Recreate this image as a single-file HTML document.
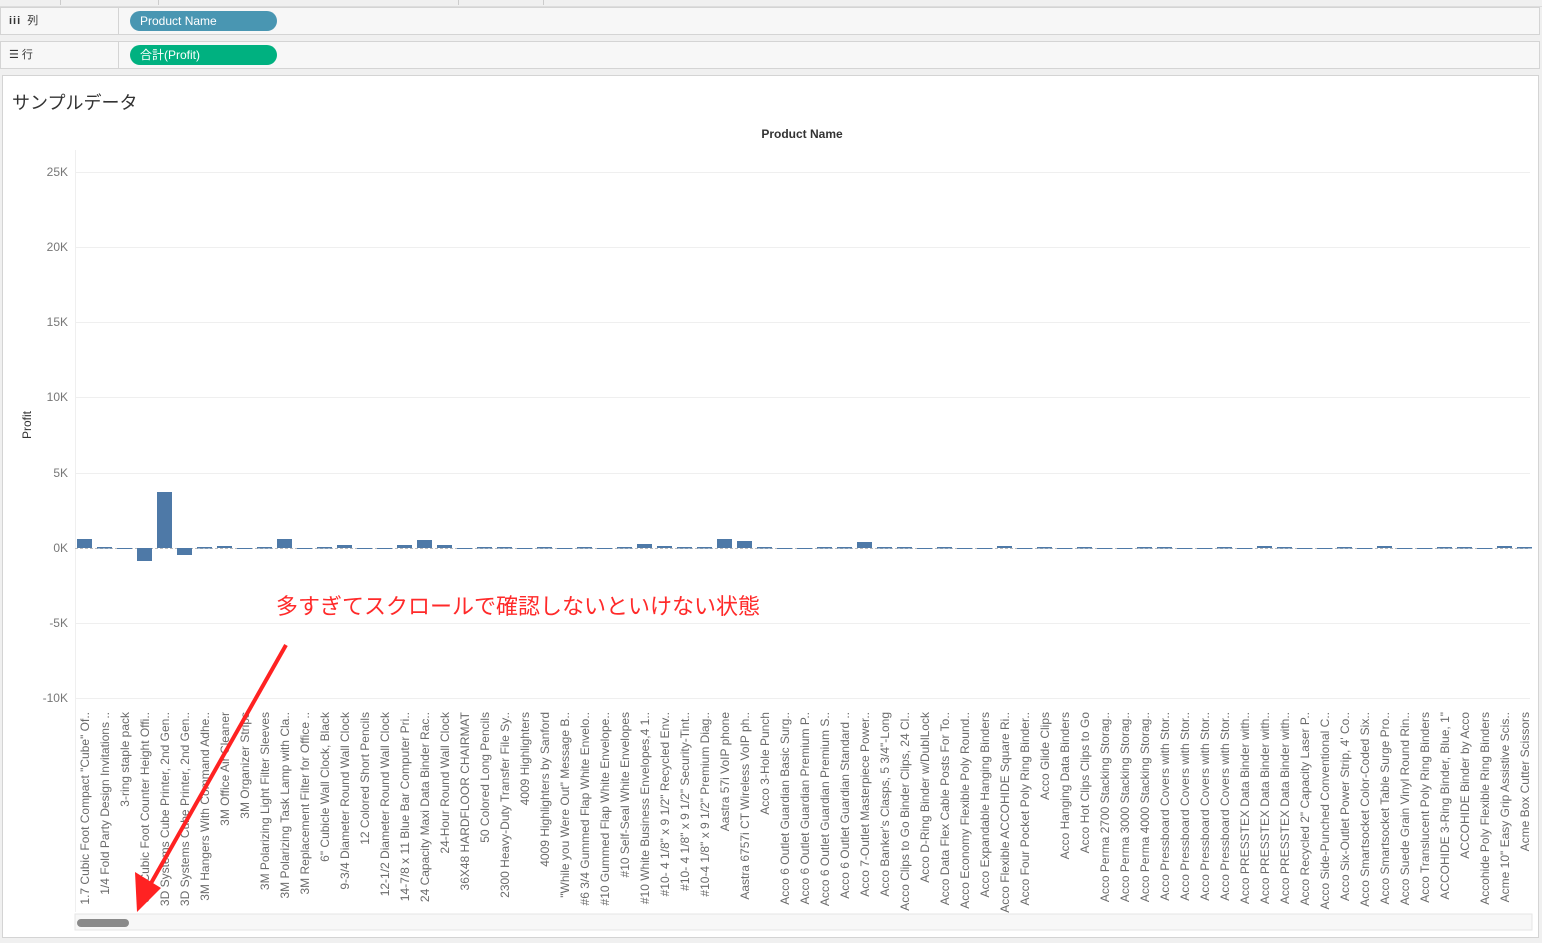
<!DOCTYPE html>
<html><head><meta charset="utf-8"><style>
body{margin:0;width:1542px;height:943px;background:#f0f0f0;font-family:"Liberation Sans","Noto Sans CJK JP",sans-serif;position:relative;overflow:hidden}
.shelf{position:absolute;left:0;width:1538px;height:26px;background:#f7f7f7;border:1px solid #d4d4d4;}
.shelf .lab{position:absolute;left:0;top:0;width:118px;height:26px;border-right:1px solid #d4d4d4;font-size:11px;color:#333;line-height:26px;padding-left:8px;box-sizing:border-box}
.pill{position:absolute;left:129px;top:3px;width:147px;height:20px;border-radius:10px;color:#fff;font-size:12px;line-height:20px;padding-left:10px;box-sizing:border-box}
</style></head><body>
<div style="position:absolute;left:0;top:0;width:1542px;height:6px;background:#f0f0f0;border-bottom:1px solid #ddd"></div>
<div style="position:absolute;left:60px;top:0;width:1px;height:5px;background:#ccc"></div>
<div style="position:absolute;left:158px;top:0;width:1px;height:5px;background:#ccc"></div>
<div style="position:absolute;left:458px;top:0;width:1px;height:5px;background:#ccc"></div>
<div style="position:absolute;left:543px;top:0;width:1px;height:5px;background:#ccc"></div>
<div class="shelf" style="top:7px"><div class="lab"><b style="letter-spacing:1px">iii</b>&nbsp; 列</div><div class="pill" style="background:#4996b2">Product Name</div></div>
<div class="shelf" style="top:41px"><div class="lab">☰ 行</div><div class="pill" style="background:#00b180">合計(Profit)</div></div>
<div style="position:absolute;left:2px;top:75px;width:1535px;height:861px;background:#fff;border:1px solid #d4d4d4"></div>
<div style="position:absolute;left:12px;top:89px;font-size:18px;color:#333">サンプルデータ</div>
<svg style="position:absolute;left:0;top:0" width="1542" height="943" font-family="Liberation Sans, sans-serif">
<g stroke="#efefef" stroke-width="1">
<line x1="75" x2="1530" y1="172.5" y2="172.5"/><line x1="75" x2="1530" y1="247.5" y2="247.5"/><line x1="75" x2="1530" y1="322.5" y2="322.5"/><line x1="75" x2="1530" y1="397.5" y2="397.5"/><line x1="75" x2="1530" y1="473.5" y2="473.5"/><line x1="75" x2="1530" y1="623.5" y2="623.5"/><line x1="75" x2="1530" y1="698.5" y2="698.5"/>
<line x1="75.5" x2="75.5" y1="150" y2="912"/>
</g>
<line x1="75" x2="1530" y1="548.5" y2="548.5" stroke="#bbb" stroke-dasharray="3,2"/>
<g font-size="12" fill="#777" text-anchor="end">
<text x="68" y="176">25K</text><text x="68" y="251">20K</text><text x="68" y="326">15K</text><text x="68" y="401">10K</text><text x="68" y="477">5K</text><text x="68" y="552">0K</text><text x="68" y="627">-5K</text><text x="68" y="702">-10K</text>
</g>
<text x="802" y="138" font-size="12" font-weight="bold" fill="#333" text-anchor="middle">Product Name</text>
<text transform="translate(31,425) rotate(-90)" font-size="12" fill="#333" text-anchor="middle">Profit</text>
<g fill="#4e79a7">
<rect x="77" y="539" width="15" height="9"/><rect x="97" y="547" width="15" height="1.5"/><rect x="117" y="548" width="15" height="1"/><rect x="137" y="548" width="15" height="13"/><rect x="157" y="492" width="15" height="56"/><rect x="177" y="548" width="15" height="7"/><rect x="197" y="547" width="15" height="1.5"/><rect x="217" y="546" width="15" height="2"/><rect x="237" y="548" width="15" height="1"/><rect x="257" y="547" width="15" height="1.5"/>
<rect x="277" y="539" width="15" height="9"/><rect x="297" y="548" width="15" height="1"/><rect x="317" y="547" width="15" height="1.5"/><rect x="337" y="545" width="15" height="3"/><rect x="357" y="548" width="15" height="1"/><rect x="377" y="548" width="15" height="1"/><rect x="397" y="545" width="15" height="3"/><rect x="417" y="540" width="15" height="8"/><rect x="437" y="545" width="15" height="3"/><rect x="457" y="548" width="15" height="1"/>
<rect x="477" y="547" width="15" height="1.5"/><rect x="497" y="547" width="15" height="1.5"/><rect x="517" y="548" width="15" height="1"/><rect x="537" y="547" width="15" height="1.5"/><rect x="557" y="548" width="15" height="1"/><rect x="577" y="547" width="15" height="1.5"/><rect x="597" y="548" width="15" height="1"/><rect x="617" y="547" width="15" height="1.5"/><rect x="637" y="544" width="15" height="4"/><rect x="657" y="546" width="15" height="2"/>
<rect x="677" y="547" width="15" height="1.5"/><rect x="697" y="547" width="15" height="1.5"/><rect x="717" y="539" width="15" height="9"/><rect x="737" y="541" width="15" height="7"/><rect x="757" y="547" width="15" height="1.5"/><rect x="777" y="548" width="15" height="1"/><rect x="797" y="548" width="15" height="1"/><rect x="817" y="547" width="15" height="1.5"/><rect x="837" y="547" width="15" height="1.5"/><rect x="857" y="542" width="15" height="6"/>
<rect x="877" y="547" width="15" height="1.5"/><rect x="897" y="547" width="15" height="1.5"/><rect x="917" y="548" width="15" height="1"/><rect x="937" y="547" width="15" height="1.5"/><rect x="957" y="548" width="15" height="1"/><rect x="977" y="548" width="15" height="1"/><rect x="997" y="546" width="15" height="2"/><rect x="1017" y="548" width="15" height="1"/><rect x="1037" y="547" width="15" height="1.5"/><rect x="1057" y="548" width="15" height="1"/>
<rect x="1077" y="547" width="15" height="1.5"/><rect x="1097" y="548" width="15" height="1"/><rect x="1117" y="548" width="15" height="1"/><rect x="1137" y="547" width="15" height="1.5"/><rect x="1157" y="547" width="15" height="1.5"/><rect x="1177" y="548" width="15" height="1"/><rect x="1197" y="548" width="15" height="1"/><rect x="1217" y="547" width="15" height="1.5"/><rect x="1237" y="548" width="15" height="1"/><rect x="1257" y="546" width="15" height="2"/>
<rect x="1277" y="547" width="15" height="1.5"/><rect x="1297" y="548" width="15" height="1"/><rect x="1317" y="548" width="15" height="1"/><rect x="1337" y="547" width="15" height="1.5"/><rect x="1357" y="548" width="15" height="1"/><rect x="1377" y="546" width="15" height="2"/><rect x="1397" y="548" width="15" height="1"/><rect x="1417" y="548" width="15" height="1"/><rect x="1437" y="547" width="15" height="1.5"/><rect x="1457" y="547" width="15" height="1.5"/>
<rect x="1477" y="548" width="15" height="1"/><rect x="1497" y="546" width="15" height="2"/><rect x="1517" y="547" width="15" height="1.5"/>
</g>
<g font-size="12" fill="#6a6a6a" text-anchor="end">
<text transform="translate(89,712) rotate(-90)">1.7 Cubic Foot Compact "Cube" Of..</text>
<text transform="translate(109,712) rotate(-90)">1/4 Fold Party Design Invitations ..</text>
<text transform="translate(129,712) rotate(-90)">3-ring staple pack</text>
<text transform="translate(149,712) rotate(-90)">3.6 Cubic Foot Counter Height Offi..</text>
<text transform="translate(169,712) rotate(-90)">3D Systems Cube Printer, 2nd Gen..</text>
<text transform="translate(189,712) rotate(-90)">3D Systems Cube Printer, 2nd Gen..</text>
<text transform="translate(209,712) rotate(-90)">3M Hangers With Command Adhe..</text>
<text transform="translate(229,712) rotate(-90)">3M Office Air Cleaner</text>
<text transform="translate(249,712) rotate(-90)">3M Organizer Strips</text>
<text transform="translate(269,712) rotate(-90)">3M Polarizing Light Filter Sleeves</text>
<text transform="translate(289,712) rotate(-90)">3M Polarizing Task Lamp with Cla..</text>
<text transform="translate(309,712) rotate(-90)">3M Replacement Filter for Office ..</text>
<text transform="translate(329,712) rotate(-90)">6" Cubicle Wall Clock, Black</text>
<text transform="translate(349,712) rotate(-90)">9-3/4 Diameter Round Wall Clock</text>
<text transform="translate(369,712) rotate(-90)">12 Colored Short Pencils</text>
<text transform="translate(389,712) rotate(-90)">12-1/2 Diameter Round Wall Clock</text>
<text transform="translate(409,712) rotate(-90)">14-7/8 x 11 Blue Bar Computer Pri..</text>
<text transform="translate(429,712) rotate(-90)">24 Capacity Maxi Data Binder Rac..</text>
<text transform="translate(449,712) rotate(-90)">24-Hour Round Wall Clock</text>
<text transform="translate(469,712) rotate(-90)">36X48 HARDFLOOR CHAIRMAT</text>
<text transform="translate(489,712) rotate(-90)">50 Colored Long Pencils</text>
<text transform="translate(509,712) rotate(-90)">2300 Heavy-Duty Transfer File Sy..</text>
<text transform="translate(529,712) rotate(-90)">4009 Highlighters</text>
<text transform="translate(549,712) rotate(-90)">4009 Highlighters by Sanford</text>
<text transform="translate(569,712) rotate(-90)">"While you Were Out" Message B..</text>
<text transform="translate(589,712) rotate(-90)">#6 3/4 Gummed Flap White Envelo..</text>
<text transform="translate(609,712) rotate(-90)">#10 Gummed Flap White Envelope..</text>
<text transform="translate(629,712) rotate(-90)">#10 Self-Seal White Envelopes</text>
<text transform="translate(649,712) rotate(-90)">#10 White Business Envelopes,4 1..</text>
<text transform="translate(669,712) rotate(-90)">#10- 4 1/8" x 9 1/2" Recycled Env..</text>
<text transform="translate(689,712) rotate(-90)">#10- 4 1/8" x 9 1/2" Security-Tint..</text>
<text transform="translate(709,712) rotate(-90)">#10-4 1/8" x 9 1/2" Premium Diag..</text>
<text transform="translate(729,712) rotate(-90)">Aastra 57i VoIP phone</text>
<text transform="translate(749,712) rotate(-90)">Aastra 6757i CT Wireless VoIP ph..</text>
<text transform="translate(769,712) rotate(-90)">Acco 3-Hole Punch</text>
<text transform="translate(789,712) rotate(-90)">Acco 6 Outlet Guardian Basic Surg..</text>
<text transform="translate(809,712) rotate(-90)">Acco 6 Outlet Guardian Premium P..</text>
<text transform="translate(829,712) rotate(-90)">Acco 6 Outlet Guardian Premium S..</text>
<text transform="translate(849,712) rotate(-90)">Acco 6 Outlet Guardian Standard ..</text>
<text transform="translate(869,712) rotate(-90)">Acco 7-Outlet Masterpiece Power..</text>
<text transform="translate(889,712) rotate(-90)">Acco Banker's Clasps, 5 3/4"-Long</text>
<text transform="translate(909,712) rotate(-90)">Acco Clips to Go Binder Clips, 24 Cl..</text>
<text transform="translate(929,712) rotate(-90)">Acco D-Ring Binder w/DublLock</text>
<text transform="translate(949,712) rotate(-90)">Acco Data Flex Cable Posts For To..</text>
<text transform="translate(969,712) rotate(-90)">Acco Economy Flexible Poly Round..</text>
<text transform="translate(989,712) rotate(-90)">Acco Expandable Hanging Binders</text>
<text transform="translate(1009,712) rotate(-90)">Acco Flexible ACCOHIDE Square Ri..</text>
<text transform="translate(1029,712) rotate(-90)">Acco Four Pocket Poly Ring Binder..</text>
<text transform="translate(1049,712) rotate(-90)">Acco Glide Clips</text>
<text transform="translate(1069,712) rotate(-90)">Acco Hanging Data Binders</text>
<text transform="translate(1089,712) rotate(-90)">Acco Hot Clips Clips to Go</text>
<text transform="translate(1109,712) rotate(-90)">Acco Perma 2700 Stacking Storag..</text>
<text transform="translate(1129,712) rotate(-90)">Acco Perma 3000 Stacking Storag..</text>
<text transform="translate(1149,712) rotate(-90)">Acco Perma 4000 Stacking Storag..</text>
<text transform="translate(1169,712) rotate(-90)">Acco Pressboard Covers with Stor..</text>
<text transform="translate(1189,712) rotate(-90)">Acco Pressboard Covers with Stor..</text>
<text transform="translate(1209,712) rotate(-90)">Acco Pressboard Covers with Stor..</text>
<text transform="translate(1229,712) rotate(-90)">Acco Pressboard Covers with Stor..</text>
<text transform="translate(1249,712) rotate(-90)">Acco PRESSTEX Data Binder with..</text>
<text transform="translate(1269,712) rotate(-90)">Acco PRESSTEX Data Binder with..</text>
<text transform="translate(1289,712) rotate(-90)">Acco PRESSTEX Data Binder with..</text>
<text transform="translate(1309,712) rotate(-90)">Acco Recycled 2" Capacity Laser P..</text>
<text transform="translate(1329,712) rotate(-90)">Acco Side-Punched Conventional C..</text>
<text transform="translate(1349,712) rotate(-90)">Acco Six-Outlet Power Strip, 4' Co..</text>
<text transform="translate(1369,712) rotate(-90)">Acco Smartsocket Color-Coded Six..</text>
<text transform="translate(1389,712) rotate(-90)">Acco Smartsocket Table Surge Pro..</text>
<text transform="translate(1409,712) rotate(-90)">Acco Suede Grain Vinyl Round Rin..</text>
<text transform="translate(1429,712) rotate(-90)">Acco Translucent Poly Ring Binders</text>
<text transform="translate(1449,712) rotate(-90)">ACCOHIDE 3-Ring Binder, Blue, 1"</text>
<text transform="translate(1469,712) rotate(-90)">ACCOHIDE Binder by Acco</text>
<text transform="translate(1489,712) rotate(-90)">Accohide Poly Flexible Ring Binders</text>
<text transform="translate(1509,712) rotate(-90)">Acme 10" Easy Grip Assistive Scis..</text>
<text transform="translate(1529,712) rotate(-90)">Acme Box Cutter Scissors</text>
</g>
<rect x="75" y="914" width="1457" height="16" fill="#f7f7f7" stroke="#e6e6e6"/>
<rect x="77" y="919" width="52" height="8" rx="4" fill="#8a8a8a"/>
<text x="276" y="614" font-size="22" fill="#ff2a2a" font-family="Liberation Sans, Noto Sans CJK JP, sans-serif">多すぎてスクロールで確認しないといけない状態</text>
<line x1="286" y1="645" x2="150" y2="885" stroke="#ff2222" stroke-width="4"/>
<polygon points="137,912 135,872 161,888" fill="#ff2222"/>
</svg>
</body></html>
